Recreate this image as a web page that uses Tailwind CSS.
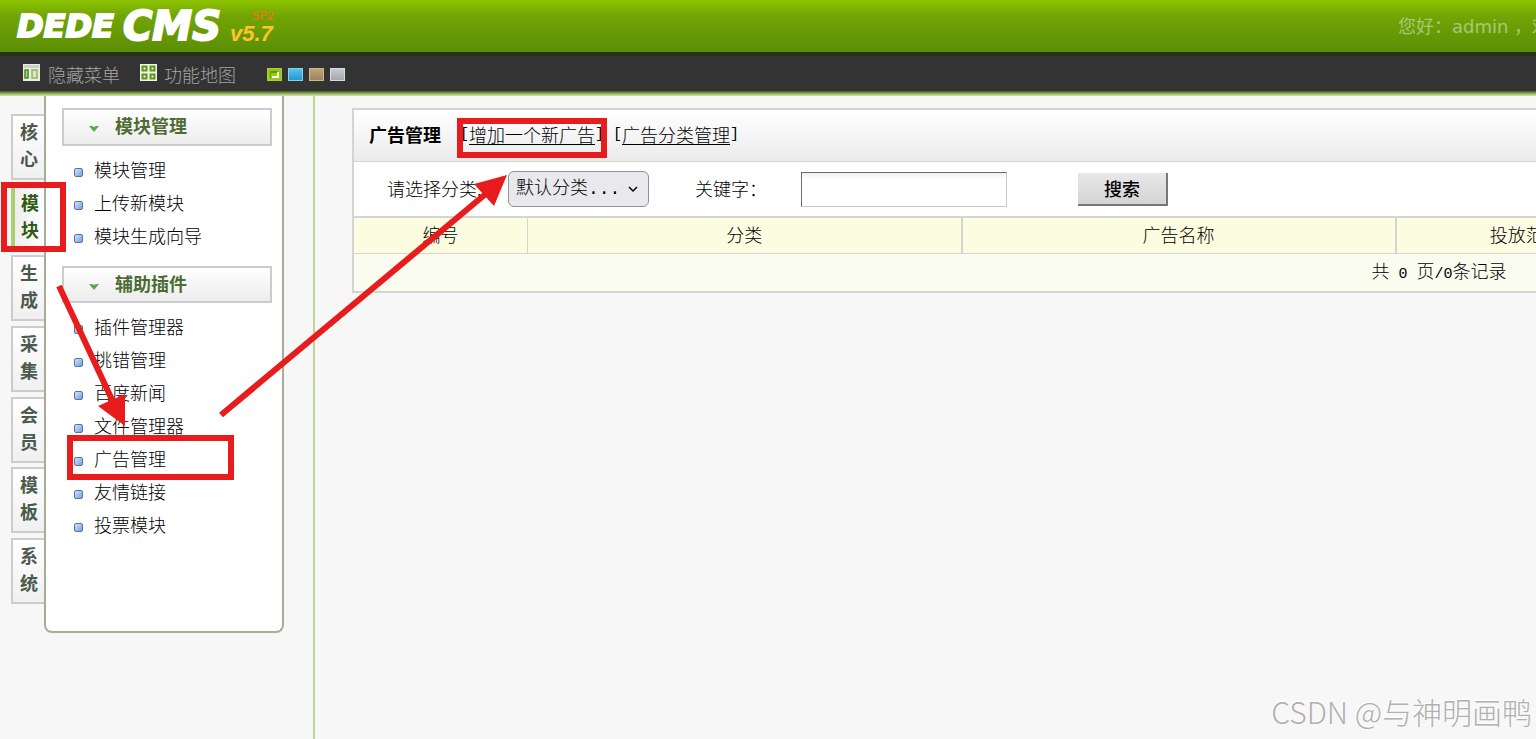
<!DOCTYPE html>
<html lang="zh-CN">
<head>
  <meta charset="UTF-8" />
  <meta name="viewport" content="width=device-width, initial-scale=1.0"/>
  <title>DedeCMS</title>
  <script src="https://cdn.jsdelivr.net/npm/@tailwindcss/browser@4"></script>
</head>
<body class="relative min-h-screen flex flex-col overflow-hidden bg-[#f7f7f7] text-[18px] leading-[33px] text-black font-light font-['Noto_Sans_CJK_SC',sans-serif]">

  <!-- Top bar -->
  <header class="flex items-center justify-between h-[52px] pl-4 bg-linear-to-b from-[#8dc400] via-[#72a504] via-30% to-[#5c8e06]">
    <svg class="w-[264px] h-[52px]" viewBox="0 0 264 52" role="img" aria-label="DedeCMS v5.7 SP2">
      <g fill="#fff" stroke="#fff" font-family="DejaVu Sans" font-weight="bold" font-style="italic">
        <text x="1" y="37" font-size="32" stroke-width="2">DEDE</text>
        <text x="107" y="40" font-size="40" stroke-width="2">CMS</text>
      </g>
      <text x="214" y="41" font-family="Liberation Sans" font-weight="bold" font-style="italic" font-size="22" fill="#fcc52c">v5.7</text>
      <text x="236" y="20" font-family="DejaVu Sans" font-weight="normal" font-size="12" fill="#f07818">SP2</text>
    </svg>
    <p class="w-[138px] pt-px overflow-hidden whitespace-nowrap font-normal text-[#a8c878] font-['DejaVu_Sans','Noto_Sans_CJK_SC',sans-serif]">您好：admin ，欢迎</p>
  </header>

  <!-- Toolbar -->
  <nav class="flex items-center h-[39px] pl-[23px] pt-[2px] border-t-4 border-[#26301a] bg-[#333] text-[#a4a4a4]">
    <a href="#" class="flex items-center gap-2">
      <svg class="w-[17px] h-[17px] mb-1" viewBox="0 0 17 17"><path fill="#e8ece4" d="M0 0h17v17H0z"/><path fill="#ccd2c8" d="M1 1h15v3H1z"/><path fill="#b5d08c" stroke="#4c8a10" stroke-width="1.5" d="M2 6h3v8H2z"/><path fill="#dbe8c8" stroke="#8eb860" stroke-width="1.5" d="M9 6h5v8H9z"/></svg>
      隐藏菜单
    </a>
    <a href="#" class="flex items-center gap-[7px] ml-5">
      <svg class="w-[17px] h-[17px] mb-1" viewBox="0 0 17 17"><path fill="#f0f4ea" d="M0 0h17v17H0z"/><path fill="none" stroke="#5c9414" stroke-width="2" d="M2.500 2.500h4v4h-4zM10.500 2.500h4v4h-4zM2.500 10.500h4v4h-4zM10.500 10.500h4v4h-4z"/></svg>
      功能地图
    </a>
    <div class="flex gap-[6px] ml-[31px]">
      <button aria-label="绿色" class="grid place-items-center w-[15px] h-[13px] border border-[#a4d428] bg-[#94c81c]"><svg class="w-[9px] h-[7px]" viewBox="0 0 9 7"><path fill="none" stroke="#6a9a08" stroke-width="2" d="M0 7V1h8"/><path fill="none" stroke="#fff" stroke-width="2" d="M2 6h6V1"/></svg></button>
      <button aria-label="蓝色" class="w-[15px] h-[13px] border border-[#84d4f0] bg-linear-to-b from-[#50c4ec] to-[#2898d0]"></button>
      <button aria-label="棕色" class="w-[15px] h-[13px] border border-[#ccb88c] bg-linear-to-b from-[#bca478] to-[#9c8460]"></button>
      <button aria-label="灰色" class="w-[15px] h-[13px] border border-[#d8dce0] bg-linear-to-b from-[#c8ccd0] to-[#a4a8ac]"></button>
    </div>
  </nav>
  <div class="h-[5px] bg-linear-to-b from-[#46562b] via-[#8fae55] to-[#d8e8b8]"></div>

  <div class="flex flex-1">
    <!-- Left menu -->
    <aside class="flex items-start w-[315px] shrink-0 pl-[11px] border-r-2 border-[#bcd890]">
      <div class="flex flex-col justify-between w-[34px] h-[490px] mt-[18px] text-center font-bold leading-[27px] text-[#4a5a4c]">
        <a href="#" class="h-[66px] pt-[2px] border-2 border-r-0 border-[#ccc] bg-linear-to-b from-white to-[#f0f0f0]">核<br>心</a>
        <a href="#" class="h-[66px] pt-1 border-l-4 border-[#a8d070] bg-linear-to-r from-[#eee] to-white text-[#2f5a10]">模<br>块</a>
        <a href="#" class="h-[66px] pt-[2px] border-2 border-r-0 border-[#ccc] bg-linear-to-b from-white to-[#f0f0f0]">生<br>成</a>
        <a href="#" class="h-[66px] pt-[2px] border-2 border-r-0 border-[#ccc] bg-linear-to-b from-white to-[#f0f0f0]">采<br>集</a>
        <a href="#" class="h-[66px] pt-[2px] border-2 border-r-0 border-[#ccc] bg-linear-to-b from-white to-[#f0f0f0]">会<br>员</a>
        <a href="#" class="h-[66px] pt-[2px] border-2 border-r-0 border-[#ccc] bg-linear-to-b from-white to-[#f0f0f0]">模<br>板</a>
        <a href="#" class="h-[66px] pt-[2px] border-2 border-r-0 border-[#ccc] bg-linear-to-b from-white to-[#f0f0f0]">系<br>统</a>
      </div>

      <div class="w-[240px] -ml-px pl-4 pr-[10px] pt-3 pb-[90px] border-x-2 border-b-2 border-[#a8ac98] rounded-b-lg bg-white">
        <h2 class="flex items-center gap-[15px] h-[38px] pl-6 pb-1 border-2 border-[#ccc] bg-linear-to-b from-white to-[#ececec] font-bold text-[#4c6c34]">
          <svg class="w-3 h-2 mt-[7px]" viewBox="0 0 12 8"><path fill="#5ca850" d="M1 1h3l2 1 2-1h3L6 7z"/></svg>模块管理
        </h2>
        <ul id="moduleMenu" class="mt-[7px] mb-[14px] pl-3"></ul>
        <h2 class="flex items-center gap-[15px] h-[37px] pl-6 pb-[3px] border-2 border-[#ccc] bg-linear-to-b from-white to-[#ececec] font-bold text-[#4c6c34]">
          <svg class="w-3 h-2 mt-[7px]" viewBox="0 0 12 8"><path fill="#5ca850" d="M1 1h3l2 1 2-1h3L6 7z"/></svg>辅助插件
        </h2>
        <ul id="pluginMenu" class="mt-[7px] pl-3"></ul>
      </div>
    </aside>

    <!-- Ad list -->
    <main class="flex-1 min-w-0 overflow-hidden pt-3 pl-[37px]">
      <div class="w-[2174px] border-2 border-[#d4d4d4] bg-white">
        <div class="flex items-center h-[52px] pl-[15px] pb-[2px] border-b border-[#d4d4d4] bg-linear-to-b from-white to-[#ebebeb]">
          <h1 class="font-bold">广告管理</h1>
          <span class="ml-[19px] font-normal text-[15px] font-['Liberation_Mono',monospace]">[</span><a href="#" class="underline underline-offset-2">增加一个新广告</a><span class="font-normal text-[15px] font-['Liberation_Mono',monospace]">]</span>
          <span class="ml-[9px] font-normal text-[15px] font-['Liberation_Mono',monospace]">[</span><a href="#" class="underline underline-offset-2">广告分类管理</a><span class="font-normal text-[15px] font-['Liberation_Mono',monospace]">]</span>
        </div>
        <form class="flex items-center h-[54px] pl-[33px]">
          <label for="adType" class="w-[121px] pb-[2px]">请选择分类:</label>
          <div class="relative">
            <select id="adType" class="block appearance-none w-[141px] h-9 pl-[7px] border border-[#8f8f9d] rounded-md bg-[#e9e9ed] font-['Liberation_Mono','Noto_Sans_CJK_SC',monospace]">
              <option>默认分类...</option>
            </select>
            <svg class="absolute right-[11px] top-[15px] w-[10px] h-[7px] pointer-events-none" viewBox="0 0 10 7"><path fill="none" stroke="#000" stroke-width="1.500" d="M1 1l4 4 4-4"/></svg>
          </div>
          <label for="keyword" class="w-[106px] ml-[46px] pb-[2px]">关键字：</label>
          <input id="keyword" type="text" class="w-[206px] h-[35px] px-2 border border-t-[#6c6c6c] border-l-[#6c6c6c] border-r-[#c8c8c8] border-b-[#c8c8c8] bg-linear-to-b from-[#eee] to-white to-20%"/>
          <button type="button" class="w-[90px] h-[33px] ml-[71px] border-r-2 border-b-2 border-[#777] bg-linear-to-b from-[#e8e8e8] to-[#d4d4d4] font-medium leading-[30px]">搜索</button>
        </form>
        <table class="w-full table-fixed text-center">
          <thead>
            <tr class="h-[36px] border-t-2 border-b border-[#d4d4d4] bg-[#fcfce0]">
              <th class="w-[8%] pb-[2px] font-light border-r border-[#d4d4d4]">编号</th>
              <th class="w-[20%] pb-[2px] font-light border-r-2 border-[#d4d4d4]">分类</th>
              <th class="w-[20%] pb-[2px] font-light border-r-2 border-[#d4d4d4]">广告名称</th>
              <th class="w-[12%] pb-[2px] font-light border-r-2 border-[#d4d4d4]">投放范围</th>
              <th></th>
            </tr>
          </thead>
          <tbody>
            <tr class="h-[36px] bg-[#fafcf0]">
              <td colspan="5">共<span class="mx-[9px] font-normal text-[15px] font-['Liberation_Mono',monospace]">0</span>页<span class="font-normal text-[15px] font-['Liberation_Mono',monospace]">/0</span>条记录</td>
            </tr>
          </tbody>
        </table>
      </div>
    </main>
  </div>

  <!-- Walkthrough marks -->
  <div class="absolute left-[1px] top-[182px] w-[65px] h-[70px] border-6 border-[#e81c1c]"></div>
  <div class="absolute left-[67px] top-[435px] w-[167px] h-[45px] border-6 border-[#e81c1c]"></div>
  <div class="absolute left-[457px] top-[118px] w-[150px] h-[40px] border-6 border-[#e81c1c]"></div>
  <svg class="absolute left-0 top-0 w-[600px] h-[480px] pointer-events-none" viewBox="0 0 600 480">
    <g fill="#e81c1c" stroke="#e81c1c">
      <path stroke-width="6" d="M59 286L114 404M221 415L488 192"/>
      <path stroke="none" d="M125 426L98 406L125 394zM507 175L474 184L494 206z"/>
    </g>
  </svg>

  <p class="absolute right-[4px] bottom-[8px] text-[30px] leading-[40px] font-light text-[#b0b0b0] text-shadow-[-1px_-1px_0_#fff]">CSDN @与神明画鸭</p>

  <script>
    const menus = {
      moduleMenu: ["模块管理", "上传新模块", "模块生成向导"],
      pluginMenu: ["插件管理器", "挑错管理", "百度新闻", "文件管理器", "广告管理", "友情链接", "投票模块"]
    };

    for (const id in menus) {
      document.getElementById(id).innerHTML = menus[id].map(name => `
        <li class="flex items-center gap-[11px]">
          <span class="w-[9px] h-[9px] mt-[5px] border border-[#667088] rounded-xs bg-linear-to-br from-[#d0e4fc] to-[#70a0e8]"></span>
          <a href="#">${name}</a>
        </li>`).join("");
    }
  </script>
</body>
</html>
